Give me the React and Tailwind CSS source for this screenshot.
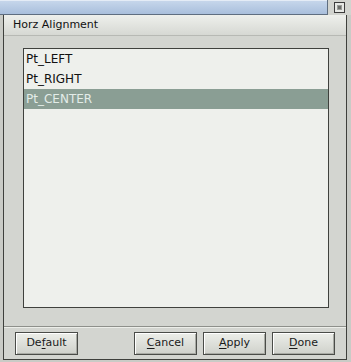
export default function App() {
    const items = ['Pt_LEFT', 'Pt_RIGHT', 'Pt_CENTER'];
    const selected = 2;

    const btn =
        'h-[23px] w-[63px] border border-[#4a4c48] bg-gradient-to-b from-[#eceee9] to-[#cfd1cb] text-[11px] text-[#1a1a1a] shadow-[inset_1px_1px_0_#ffffff,inset_-1px_-1px_0_#a8aaa4] flex items-center justify-center';

    return (
        <div
            className="w-[351px] h-[362px] bg-[#c9cbc6] flex flex-col overflow-hidden"
            style={{ fontFamily: '"DejaVu Sans", Verdana, sans-serif' }}
        >
            {/* title bar */}
            <div className="h-[15px] flex">
                <div className="flex-1 bg-gradient-to-b from-[#c8d8ec] to-[#a9bfdc] border-b border-r border-[#5f6e80] shadow-[inset_0_1px_0_#e4ecf6]" />
                <div className="w-[23px] bg-[#d2d4cf] flex items-center justify-center">
                    <div className="w-[11px] h-[11px] border border-[#3c3c3c] bg-[#e6e8e4] flex items-center justify-center">
                        <div className="w-[5px] h-[5px] bg-[#6c6e6a] border border-[#9a9c98]" />
                    </div>
                </div>
            </div>

            {/* dialog frame */}
            <div className="flex-1 ml-[3px] mr-[4px] mb-[2px] border-l border-r border-b border-[#3e403c] bg-[#d3d5d0] flex flex-col">
                <div className="h-[21px] bg-gradient-to-b from-[#eef0ec] to-[#d6d8d3] border-b border-[#b7b9b4] flex items-center pl-[9px] text-[11px] text-[#111]">
                    Horz Alignment
                </div>

                <div className="flex-1 pt-[12px] pl-[19px] pr-[17px] pb-[18px] border-b border-[#8e908b]">
                    <div className="h-full border border-[#3f413d] bg-[#eef0ec] pt-[0px]">
                        {items.map((item, i) => (
                            <div
                                key={item}
                                className={
                                    i === selected
                                        ? 'h-[20px] flex items-center pl-[2px] text-[12px] bg-[#8a9e94] text-[#e3ece8]'
                                        : 'h-[20px] flex items-center pl-[2px] text-[12px] text-[#111]'
                                }
                            >
                                {item}
                            </div>
                        ))}
                    </div>
                </div>

                <div className="h-[32px] flex items-center pl-[11px] pr-[11px] border-t border-[#eceee9]">
                    <button className={btn}>
                        De<span className="underline underline-offset-2">f</span>ault
                    </button>
                    <div className="flex-1" />
                    <div className="flex gap-[6px]">
                        <button className={btn}>
                            <span className="underline underline-offset-2">C</span>ancel
                        </button>
                        <button className={btn}>
                            <span className="underline underline-offset-2">A</span>pply
                        </button>
                        <button className={btn}>
                            <span className="underline underline-offset-2">D</span>one
                        </button>
                    </div>
                </div>
            </div>
        </div>
    );
}
